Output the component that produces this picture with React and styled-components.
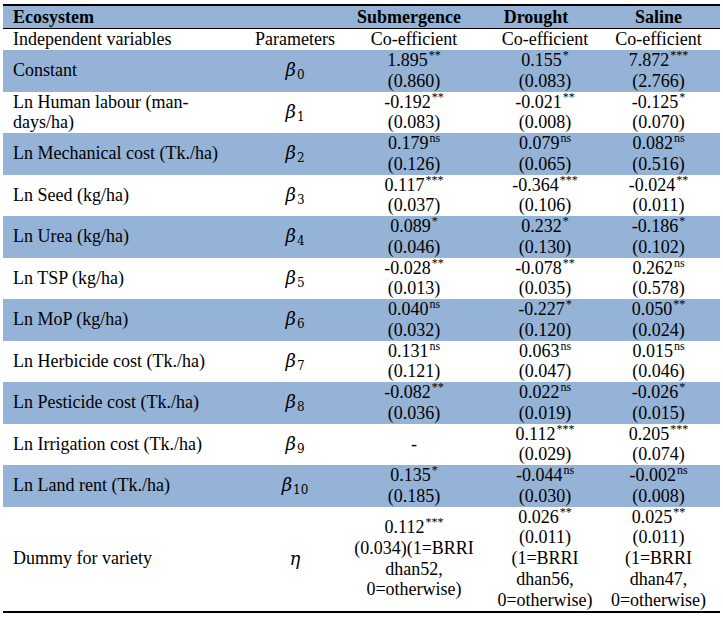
import React from 'react';
import styled, { createGlobalStyle } from 'styled-components';

const GlobalStyle = createGlobalStyle`
  body {
    margin: 0;
    background: #fff;
    font-family: "Liberation Serif", "Times New Roman", serif;
    color: #000;
  }
`;

const BLUE = '#95B3D7';

const Page = styled.div`
  padding: 4px 3px 0 3px;
  width: 717px;
`;

const Table = styled.div`
  display: grid;
  grid-template-columns: 252px 80px 158px 104px 123px;
  border-top: 2px solid #000;
  border-bottom: 2px solid #000;
  font-family: "Liberation Serif", "Times New Roman", serif;
  font-size: 18px;
  line-height: 20.75px;
`;

const Cell = styled.div`
  background: ${(p) => (p.$shade ? BLUE : '#fff')};
  display: flex;
  flex-direction: column;
  justify-content: center;
  align-items: ${(p) => (p.$left ? 'flex-start' : 'center')};
  text-align: ${(p) => (p.$left ? 'left' : 'center')};
  padding: ${(p) => (p.$left ? '0 0 0 10px' : `0 ${p.$shift || 0}px 0 0`)};
  height: ${(p) => p.$h}px;
  white-space: nowrap;
  border-bottom: ${(p) => (p.$rule ? '1px solid #000' : 'none')};
`;

const HeadText = styled.span`
  font-weight: bold;
`;

const Sup = styled.sup`
  font-size: 12px;
  line-height: 0;
  vertical-align: 7px;
  margin-left: 1px;
`;

const Beta = styled.span`
  font-family: "DejaVu Serif", serif;
  font-style: italic;
  font-size: 18px;
  line-height: 20px;
`;

const Sub = styled.sub`
  font-family: "DejaVu Serif", serif;
  font-style: normal;
  font-size: 12px;
  line-height: 0;
  vertical-align: -3px;
  margin-left: 1px;
`;

const rows = [
  { name: 'Constant', p: '0', v: [['1.895', '**', '(0.860)'], ['0.155', '*', '(0.083)'], ['7.872', '***', '(2.766)']] },
  { name: ['Ln Human labour (man-', 'days/ha)'], p: '1', v: [['-0.192', '**', '(0.083)'], ['-0.021', '**', '(0.008)'], ['-0.125', '*', '(0.070)']] },
  { name: 'Ln Mechanical cost (Tk./ha)', p: '2', v: [['0.179', 'ns', '(0.126)'], ['0.079', 'ns', '(0.065)'], ['0.082', 'ns', '(0.516)']] },
  { name: 'Ln Seed (kg/ha)', p: '3', v: [['0.117', '***', '(0.037)'], ['-0.364', '***', '(0.106)'], ['-0.024', '**', '(0.011)']] },
  { name: 'Ln Urea (kg/ha)', p: '4', v: [['0.089', '*', '(0.046)'], ['0.232', '*', '(0.130)'], ['-0.186', '*', '(0.102)']] },
  { name: 'Ln TSP (kg/ha)', p: '5', v: [['-0.028', '**', '(0.013)'], ['-0.078', '**', '(0.035)'], ['0.262', 'ns', '(0.578)']] },
  { name: 'Ln MoP (kg/ha)', p: '6', v: [['0.040', 'ns', '(0.032)'], ['-0.227', '*', '(0.120)'], ['0.050', '**', '(0.024)']] },
  { name: 'Ln Herbicide cost (Tk./ha)', p: '7', v: [['0.131', 'ns', '(0.121)'], ['0.063', 'ns', '(0.047)'], ['0.015', 'ns', '(0.046)']] },
  { name: 'Ln Pesticide cost (Tk./ha)', p: '8', v: [['-0.082', '**', '(0.036)'], ['0.022', 'ns', '(0.019)'], ['-0.026', '*', '(0.015)']] },
  { name: 'Ln Irrigation cost (Tk./ha)', p: '9', v: [null, ['0.112', '***', '(0.029)'], ['0.205', '***', '(0.074)']] },
  { name: 'Ln Land rent (Tk./ha)', p: '10', v: [['0.135', '*', '(0.185)'], ['-0.044', 'ns', '(0.030)'], ['-0.002', 'ns', '(0.008)']] },
];

const Value = ({ v }) => {
  if (!v) return <span>-</span>;
  return (
    <>
      <span>{v[0]}<Sup>{v[1]}</Sup></span>
      <span>{v[2]}</span>
    </>
  );
};

const RH = 41.5;

export default function App() {
  return (
    <Page>
      <GlobalStyle />
      <Table>
        <Cell $shade $left $h={22} $rule><HeadText>Ecosystem</HeadText></Cell>
        <Cell $shade $h={22} $rule />
        <Cell $shade $h={22} $rule $shift={10}><HeadText>Submergence</HeadText></Cell>
        <Cell $shade $h={22} $rule $shift={18}><HeadText>Drought</HeadText></Cell>
        <Cell $shade $h={22} $rule><HeadText>Saline</HeadText></Cell>

        <Cell $left $h={21}>Independent variables</Cell>
        <Cell $h={21}>Parameters</Cell>
        <Cell $h={21}>Co-efficient</Cell>
        <Cell $h={21}>Co-efficient</Cell>
        <Cell $h={21}>Co-efficient</Cell>

        {rows.map((r, i) => {
          const shade = i % 2 === 0;
          return (
            <React.Fragment key={r.p}>
              <Cell $left $shade={shade} $h={RH}>
                {Array.isArray(r.name) ? r.name.map((n) => <span key={n}>{n}</span>) : r.name}
              </Cell>
              <Cell $shade={shade} $h={RH}>
                <span><Beta>β</Beta><Sub>{r.p}</Sub></span>
              </Cell>
              {r.v.map((v, j) => (
                <Cell key={j} $shade={shade} $h={RH}>
                  <Value v={v} />
                </Cell>
              ))}
            </React.Fragment>
          );
        })}

        <Cell $left $h={104}>Dummy for variety</Cell>
        <Cell $h={104}><Beta>η</Beta></Cell>
        <Cell $h={104}>
          <span>0.112<Sup>***</Sup></span>
          <span>(0.034)(1=BRRI</span>
          <span>dhan52,</span>
          <span>0=otherwise)</span>
        </Cell>
        <Cell $h={104}>
          <span>0.026<Sup>**</Sup></span>
          <span>(0.011)</span>
          <span>(1=BRRI</span>
          <span>dhan56,</span>
          <span>0=otherwise)</span>
        </Cell>
        <Cell $h={104}>
          <span>0.025<Sup>**</Sup></span>
          <span>(0.011)</span>
          <span>(1=BRRI</span>
          <span>dhan47,</span>
          <span>0=otherwise)</span>
        </Cell>
      </Table>
    </Page>
  );
}
